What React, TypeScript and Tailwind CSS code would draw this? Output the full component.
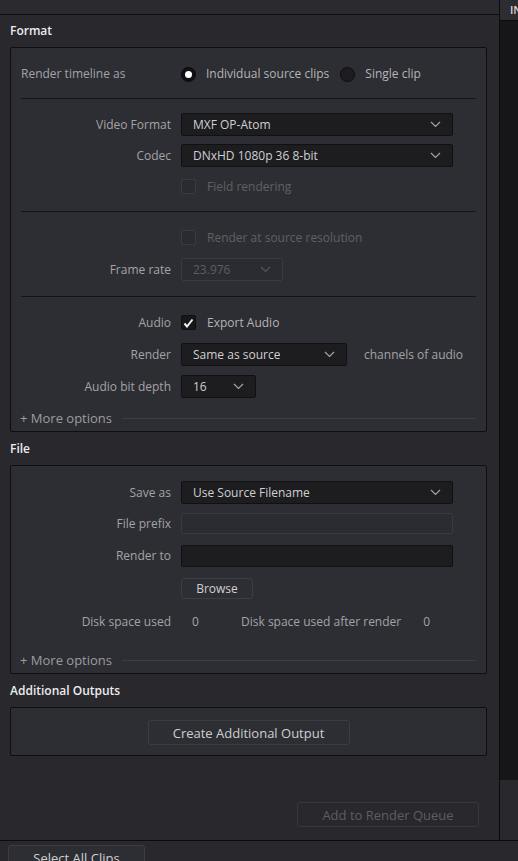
import type { ReactNode } from "react";

const font = { fontFamily: '"Open Sans", "Liberation Sans", sans-serif' };

function Chevron({ dim = false }: { dim?: boolean }) {
  return (
    <svg width="11" height="7" viewBox="0 0 11 7" className="shrink-0">
      <polyline
        points="1,1 5.5,5.5 10,1"
        fill="none"
        stroke={dim ? "#55565b" : "#a4a4a8"}
        strokeWidth="1.2"
      />
    </svg>
  );
}

function Select({
  value,
  width,
  disabled = false,
}: {
  value: string;
  width: string;
  disabled?: boolean;
}) {
  return (
    <div
      className={`flex h-[23px] items-center justify-between rounded-[2px] border pl-[11px] pr-[11px] ${width} ${
        disabled
          ? "border-[#3a3b40] bg-[#2b2c31] text-[#5c5d62]"
          : "border-[#111113] bg-[#1d1d20] text-[#cfcfd2]"
      }`}
    >
      <span className="truncate">{value}</span>
      <Chevron dim={disabled} />
    </div>
  );
}

function Checkbox({ checked = false }: { checked?: boolean }) {
  return (
    <div
      className={`flex h-[15px] w-[15px] shrink-0 items-center justify-center rounded-[2px] border ${
        checked ? "border-[#0f0f11] bg-[#17171a]" : "border-[#3b3c41] bg-[#2a2b30]"
      }`}
    >
      {checked && (
        <svg width="11" height="10" viewBox="0 0 11 10">
          <polyline points="1.5,5.5 4,8.5 9.5,1.5" fill="none" stroke="#f2f2f2" strokeWidth="2" />
        </svg>
      )}
    </div>
  );
}

function Radio({ checked = false }: { checked?: boolean }) {
  return (
    <div
      className={`flex h-[15px] w-[15px] shrink-0 items-center justify-center rounded-full border ${
        checked ? "border-[#0a0a0b] bg-[#111113]" : "border-[#0c0c0d] bg-[#1d1d20]"
      }`}
    >
      {checked && <div className="h-[7px] w-[7px] rounded-full bg-white" />}
    </div>
  );
}

function Row({ label, className = "", children }: { label?: string; className?: string; children: ReactNode }) {
  return (
    <div className={`flex items-center ${className}`}>
      <div className="w-[150px] shrink-0 text-right text-[#a3a3a7]">{label}</div>
      <div className="ml-[10px] flex items-center">{children}</div>
    </div>
  );
}

function Divider({ className = "" }: { className?: string }) {
  return <div className={`h-px bg-[#151517] ${className}`} />;
}

function MoreOptions({ className = "" }: { className?: string }) {
  return (
    <div className={`flex h-[20px] items-center ${className}`}>
      <span className="-ml-px text-[13px] text-[#9c9ca0]">+ More options</span>
      <div className="ml-[10px] h-px flex-1 bg-[#3d3e43]" />
    </div>
  );
}

function SectionTitle({ children, h }: { children: ReactNode; h: string }) {
  return (
    <div className={`flex items-center text-[12px] font-semibold text-[#ececee] ${h}`}>{children}</div>
  );
}

function Panel({ className = "", children }: { className?: string; children: ReactNode }) {
  return (
    <div className={`rounded-[2px] border border-[#0e0e10] bg-[#2d2e33] px-[10px] ${className}`}>
      {children}
    </div>
  );
}

export default function App() {
  return (
    <div style={font} className="flex h-[861px] w-[518px] flex-col overflow-hidden bg-[#28282d] text-[12px] leading-[16px]">
      <div className="flex h-[841px] shrink-0 border-b border-[#0c0c0d]">
        {/* settings column */}
        <div className="flex w-[500px] shrink-0 flex-col border-r border-[#0c0c0d]">
          <div className="h-[15px] shrink-0 border-b border-[#0e0e10] bg-[#2a2a2f]" />
          <div className="pl-[10px] pr-[12px]">
            <SectionTitle h="h-[32px]">Format</SectionTitle>
            <Panel className="pt-[13px] pb-[3px]">
              <div className="flex h-[26px] items-center text-[#a3a3a7]">
                <span className="w-[160px]">Render timeline as</span>
                <Radio checked />
                <span className="ml-[10px] text-[#b4b4b8]">Individual source clips</span>
                <span className="ml-[11px]">
                  <Radio />
                </span>
                <span className="ml-[10px] text-[#b4b4b8]">Single clip</span>
              </div>
              <Divider className="mt-[11px]" />
              <Row label="Video Format" className="mt-[14px]">
                <Select value="MXF OP-Atom" width="w-[272px]" />
              </Row>
              <Row label="Codec" className="mt-[8px]">
                <Select value="DNxHD 1080p 36 8-bit" width="w-[272px]" />
              </Row>
              <Row className="mt-[12px] h-[15px]">
                <Checkbox />
                <span className="ml-[11px] text-[#5f6065]">Field rendering</span>
              </Row>
              <Divider className="mt-[17px]" />
              <Row className="mt-[18px] h-[15px]">
                <Checkbox />
                <span className="ml-[11px] text-[#5f6065]">Render at source resolution</span>
              </Row>
              <Row label="Frame rate" className="mt-[13px]">
                <Select value="23.976" width="w-[102px]" disabled />
              </Row>
              <Divider className="mt-[15px]" />
              <Row label="Audio" className="mt-[18px] h-[15px]">
                <Checkbox checked />
                <span className="ml-[11px] text-[#b4b4b8]">Export Audio</span>
              </Row>
              <Row label="Render" className="mt-[13px]">
                <Select value="Same as source" width="w-[166px]" />
                <span className="ml-[17px] text-[#a3a3a7]">channels of audio</span>
              </Row>
              <Row label="Audio bit depth" className="mt-[9px]">
                <Select value="16" width="w-[75px]" />
              </Row>
              <MoreOptions className="mt-[10px]" />
            </Panel>

            <SectionTitle h="h-[33px]">File</SectionTitle>
            <Panel className="pt-[15px] pb-[3px]">
              <Row label="Save as">
                <Select value="Use Source Filename" width="w-[272px]" />
              </Row>
              <Row label="File prefix" className="mt-[9px]">
                <div className="h-[21px] w-[272px] rounded-[2px] border border-[#3a3b40] bg-[#2b2c31]" />
              </Row>
              <Row label="Render to" className="mt-[11px]">
                <div className="h-[22px] w-[272px] rounded-[2px] border border-[#111113] bg-[#1d1d20]" />
              </Row>
              <Row className="mt-[11px]">
                <button className="flex h-[21px] w-[72px] items-center justify-center rounded-[3px] border border-[#3c3d42] bg-[#2d2e33] text-[#cfcfd2]">
                  Browse
                </button>
              </Row>
              <Row label="Disk space used" className="mt-[15px] h-[16px]">
                <span className="w-[60px] pl-[11px] text-[#a3a3a7]">0</span>
                <span className="text-[#a3a3a7]">Disk space used after render</span>
                <span className="ml-[22px] text-[#a3a3a7]">0</span>
              </Row>
              <MoreOptions className="mt-[20px]" />
            </Panel>

            <SectionTitle h="h-[33px]">Additional Outputs</SectionTitle>
            <Panel className="flex justify-center pt-[12px] pb-[10px]">
              <button className="flex h-[25px] w-[202px] items-center justify-center rounded-[3px] border border-[#3c3d42] bg-[#2d2e33] text-[13px] text-[#cfcfd2]">
                Create Additional Output
              </button>
            </Panel>

            <div className="mt-[46px] flex justify-end pr-[8px]">
              <button className="flex h-[25px] w-[182px] items-center justify-center rounded-[3px] border border-[#38393e] text-[13px] text-[#5d5e63]">
                Add to Render Queue
              </button>
            </div>
          </div>
        </div>

        {/* side strip */}
        <div className="flex min-w-0 flex-1 flex-col">
          <div className="flex h-[21px] shrink-0 items-center overflow-hidden whitespace-nowrap border-b border-[#0c0c0d] bg-[#2c2c31] pl-[10px] text-[11px] font-semibold text-[#d8d8dc]">
            IN
          </div>
          <div className="h-[759px] shrink-0 bg-[#161618]" />
          <div className="flex-1 bg-[#28282d]" />
        </div>
      </div>

      {/* bottom bar */}
      <div className="min-h-0 flex-1 overflow-hidden bg-[#28282d] pl-[8px] pt-[4px]">
        <button className="flex h-[25px] w-[137px] items-center justify-center rounded-[3px] border border-[#3c3d42] bg-[#2d2e33] text-[13px] text-[#d2d2d5]">
          Select All Clips
        </button>
      </div>
    </div>
  );
}
